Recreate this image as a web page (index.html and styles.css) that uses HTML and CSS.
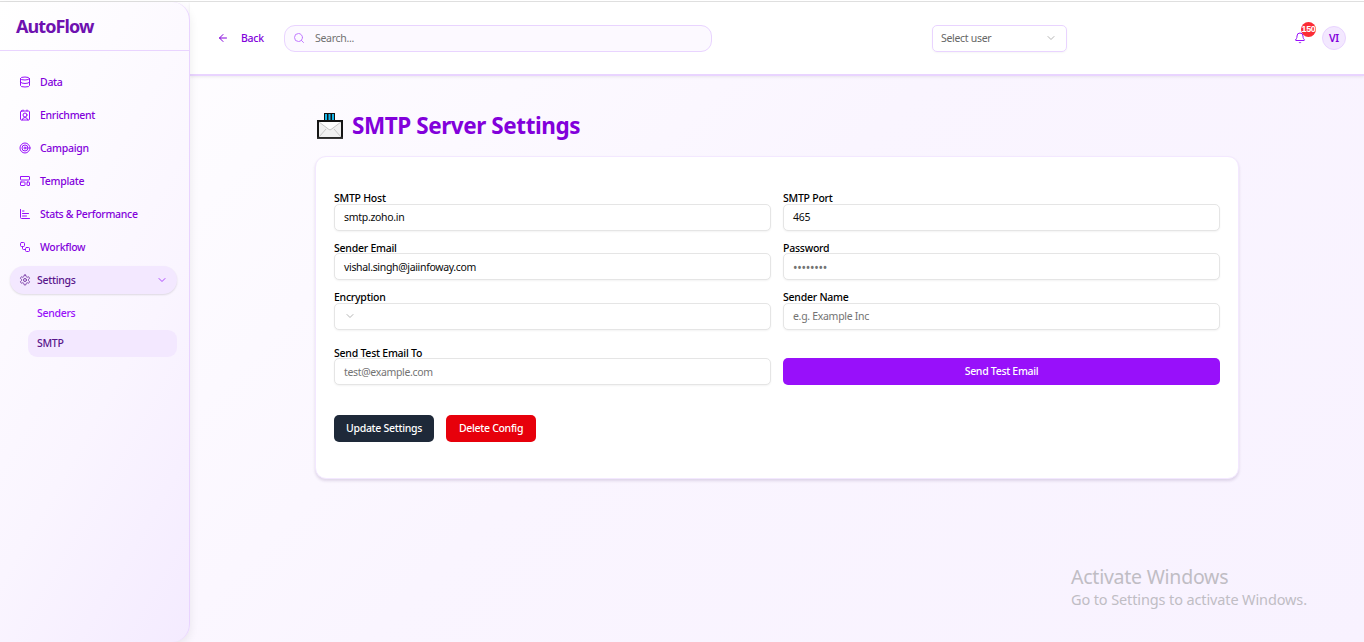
FILE: index.html
```html
<!DOCTYPE html>
<html lang="en">
<head>
<meta charset="utf-8">
<title>AutoFlow</title>
<link rel="stylesheet" href="styles.css">
</head>
<body>
<div class="app">
  <aside class="sidebar">
    <div class="brand"><span>AutoFlow</span></div>
    <nav class="nav">
      <a class="nav-item"><svg class="icon" viewBox="0 0 24 24"><ellipse cx="12" cy="5" rx="9" ry="3"/><path d="M3 5v14a9 3 0 0 0 18 0V5M3 12a9 3 0 0 0 18 0"/></svg><span>Data</span></a>
      <a class="nav-item"><svg class="icon" viewBox="0 0 24 24"><path d="M16 2v2M8 2v2M17.900 22a6 6 0 0 0-11.800 0"/><circle cx="12" cy="12" r="4"/><rect x="3" y="4" width="18" height="18" rx="2"/></svg><span>Enrichment</span></a>
      <a class="nav-item"><svg class="icon" viewBox="0 0 24 24"><circle cx="12" cy="12" r="10"/><circle cx="12" cy="12" r="6"/><circle cx="12" cy="12" r="2"/></svg><span>Campaign</span></a>
      <a class="nav-item"><svg class="icon" viewBox="0 0 24 24"><rect x="3" y="3" width="18" height="7" rx="1"/><rect x="3" y="14" width="9" height="7" rx="1"/><rect x="16" y="14" width="5" height="7" rx="1"/></svg><span>Template</span></a>
      <a class="nav-item"><svg class="icon" viewBox="0 0 24 24"><path d="M3 3v16a2 2 0 0 0 2 2h16M7 16h8M7 11h12M7 6h3"/></svg><span>Stats &amp; Performance</span></a>
      <a class="nav-item"><svg class="icon" viewBox="0 0 24 24"><rect x="3" y="3" width="8" height="8" rx="2"/><path d="M7 11v4a2 2 0 0 0 2 2h4"/><rect x="13" y="13" width="8" height="8" rx="2"/></svg><span>Workflow</span></a>
      <a class="nav-item open"><svg class="icon" viewBox="0 0 24 24"><path d="M12.22 2h-.44a2 2 0 0 0-2 2v.18a2 2 0 0 1-1 1.73l-.43.25a2 2 0 0 1-2 0l-.15-.08a2 2 0 0 0-2.73.73l-.22.38a2 2 0 0 0 .73 2.73l.15.1a2 2 0 0 1 1 1.72v.51a2 2 0 0 1-1 1.74l-.15.09a2 2 0 0 0-.73 2.73l.22.38a2 2 0 0 0 2.73.73l.15-.08a2 2 0 0 1 2 0l.43.25a2 2 0 0 1 1 1.73V20a2 2 0 0 0 2 2h.44a2 2 0 0 0 2-2v-.18a2 2 0 0 1 1-1.73l.43-.25a2 2 0 0 1 2 0l.15.08a2 2 0 0 0 2.73-.73l.22-.39a2 2 0 0 0-.73-2.73l-.15-.08a2 2 0 0 1-1-1.74v-.5a2 2 0 0 1 1-1.74l.15-.09a2 2 0 0 0 .73-2.73l-.22-.38a2 2 0 0 0-2.73-.73l-.15.08a2 2 0 0 1-2 0l-.43-.25a2 2 0 0 1-1-1.73V4a2 2 0 0 0-2-2z"/><circle cx="12" cy="12" r="3"/></svg><span>Settings</span><svg class="icon chevron" viewBox="0 0 24 24"><path d="m6 9 6 6 6-6"/></svg></a>
      <div class="subnav">
        <a class="sub-item">Senders</a>
        <a class="sub-item active">SMTP</a>
      </div>
    </nav>
  </aside>
  <div class="content">
    <header class="topbar">
      <a class="back"><svg class="icon" viewBox="0 0 24 24"><path d="m12 19-7-7 7-7M19 12H5"/></svg><span>Back</span></a>
      <div class="search"><svg class="icon" viewBox="0 0 24 24"><circle cx="11" cy="11" r="8"/><path d="m21 21-4.3-4.3"/></svg><span>Search...</span></div>
      <div class="user-select"><span>Select user</span><svg class="icon" viewBox="0 0 24 24"><path d="m6 9 6 6 6-6"/></svg></div>
      <div class="account">
        <div class="bell"><svg class="icon" viewBox="0 0 24 24"><path d="M10.27 21a2 2 0 0 0 3.46 0M3.26 15.33A1 1 0 0 0 4 17h16a1 1 0 0 0 .74-1.67C19.41 13.96 18 12.5 18 8A6 6 0 0 0 6 8c0 4.5-1.41 5.96-2.74 7.33"/></svg><span class="badge">150</span></div>
        <div class="avatar">VI</div>
      </div>
    </header>
    <main class="main">
      <h1 class="title">
        <svg class="mail" viewBox="0 0 26 26"><rect x="7" y="0" width="11" height="10" fill="#111"/><path d="M9 1v7M12.500 1v7M16 1v7" stroke="#16b5e8" stroke-width="2"/><rect x="1" y="8" width="24" height="17" fill="#f1f1f1" stroke="#151515" stroke-width="2"/><path d="M2 9h22l-10 7.500q-1 .7-2 0z" fill="#fff"/><path d="m2 9 10 7.500q1 .7 2 0l10-7.500M2 24l7-8M24 24l-7-8" fill="none" stroke="#c7c7c7"/><path d="M0 25.200h26" stroke="#383838" stroke-width="1.600"/></svg>
        <span>SMTP Server Settings</span>
      </h1>
      <section class="card">
        <div class="grid">
          <div class="field"><label>SMTP Host</label><div class="input">smtp.zoho.in</div></div>
          <div class="field"><label>SMTP Port</label><div class="input">465</div></div>
          <div class="field"><label>Sender Email</label><div class="input low">vishal.singh@jaiinfoway.com</div></div>
          <div class="field"><label>Password</label><div class="input placeholder dots">••••••••</div></div>
          <div class="field"><label>Encryption</label><div class="input"><svg class="icon caret" viewBox="0 0 24 24"><path d="m6 9 6 6 6-6"/></svg></div></div>
          <div class="field"><label>Sender Name</label><div class="input placeholder">e.g. Example Inc</div></div>
        </div>
        <div class="grid test">
          <div class="field"><label>Send Test Email To</label><div class="input placeholder low">test@example.com</div></div>
          <button class="btn send">Send Test Email</button>
        </div>
        <div class="actions">
          <button class="btn update">Update Settings</button>
          <button class="btn delete">Delete Config</button>
        </div>
      </section>
    </main>
  </div>
  <div class="watermark"><div class="wm-title">Activate Windows</div><div class="wm-text">Go to Settings to activate Windows.</div></div>
</div>
</body>
</html>
```
FILE: styles.css
```css
*, *::before { box-sizing: border-box; }
body {
  margin: 0;
  font-family: "Noto Sans", "Open Sans", sans-serif;
  font-size: 10.5px;
  line-height: 15px;
  letter-spacing: -0.3px;
  color: #0a0a0a;
}
.app {
  position: relative;
  display: flex;
  width: 1364px;
  height: 642px;
  padding-top: 1px;
  overflow: hidden;
  background: linear-gradient(135deg, #ffffff, #faf5ff 50%, #f8f2ff);
}
.app::before {
  content: "";
  position: absolute;
  inset: 0 0 auto;
  height: 2px;
  background: #fff;
  border-bottom: 1px solid #dfdfdf;
}
.icon {
  width: 12px;
  height: 12px;
  flex: none;
  fill: none;
  stroke: currentColor;
  stroke-width: 2;
  stroke-linecap: round;
  stroke-linejoin: round;
}
.sidebar {
  position: relative;
  z-index: 2;
  width: 190px;
  margin-top: 1px;
  flex: none;
  border-right: 1px solid #e9d4ff;
  border-radius: 0 18px 18px 0;
  background: linear-gradient(120deg, #ffffff, #faf5ff 60%, #f4ebff);
  box-shadow: 0 4px 10px rgba(0, 0, 0, 0.08);
}
.brand {
  height: 49px;
  padding: 12px 16px 0;
  border-bottom: 1px solid #e9d4ff;
  font-size: 18px;
  line-height: 24px;
  font-weight: 700;
  letter-spacing: -0.9px;
  color: #6e11b0;
}
.nav {
  display: flex;
  flex-direction: column;
  gap: 5px;
  padding: 17px 12px 0 9.5px;
}
.nav-item {
  display: flex;
  align-items: center;
  height: 28px;
  padding: 0 9px 0 9.5px;
  gap: 9px;
  border-radius: 14px;
  font-weight: 500;
  color: #8200db;
}
.nav-item .icon { color: #9810fa; }
.nav-item.open {
  gap: 6px;
  background: #f3e8ff;
  color: #59168b;
  box-shadow: 0 1px 2px rgba(0, 0, 0, 0.12);
}
.nav-item.open .icon { color: #7c3fa8; }
.nav-item.open .chevron { margin-left: auto; color: #ad46ff; }
.subnav {
  display: flex;
  flex-direction: column;
  gap: 3px;
  padding: 1px 0 0 18.5px;
}
.sub-item {
  height: 27px;
  padding: 0 9px;
  border-radius: 9px;
  line-height: 26px;
  font-weight: 500;
  color: #9810fa;
}
.sub-item.active { background: #f3e8ff; color: #59168b; }
.content { flex: 1; min-width: 0; }
.topbar {
  display: flex;
  align-items: center;
  height: 74px;
  margin-top: 1px;
  padding: 0 18px 0 27px;
  background: #fff;
  border-bottom: 2px solid #e9d4ff;
  box-shadow: 0 1px 3px rgba(0, 0, 0, 0.08);
}
.back {
  display: flex;
  align-items: center;
  gap: 12px;
  width: 67px;
  font-weight: 500;
  color: #8200db;
}
.search {
  display: flex;
  align-items: center;
  gap: 10px;
  width: 428px;
  height: 27px;
  padding-left: 8px;
  border: 1px solid #e9d4ff;
  border-radius: 11px;
  background: #fcf9ff;
  color: #717171;
}
.search .icon { color: #c27aff; }
.user-select {
  display: flex;
  align-items: center;
  justify-content: space-between;
  width: 135px;
  height: 27px;
  margin-left: 220px;
  padding: 0 9px 0 8px;
  border: 1px solid #e9d4ff;
  border-radius: 5px;
  color: #666;
  box-shadow: 0 1px 2px rgba(0, 0, 0, 0.04);
}
.user-select .icon { color: #b5b5b5; }
.account {
  display: flex;
  align-items: center;
  gap: 16px;
  margin-left: auto;
}
.bell { position: relative; display: flex; color: #9810fa; }
.badge {
  position: absolute;
  left: 7px;
  top: -10px;
  display: flex;
  justify-content: center;
  width: 15px;
  height: 15px;
  border-radius: 50%;
  background: #fb2c36;
  color: #fff;
  font-family: "Liberation Sans", sans-serif;
  font-size: 9px;
  font-weight: 700;
  line-height: 15px;
  letter-spacing: -0.4px;
}
.avatar {
  width: 24px;
  height: 24px;
  border: 1px solid #e9d4ff;
  border-radius: 50%;
  background: #f3e8ff;
  color: #8200db;
  font-weight: 600;
  line-height: 22px;
  text-align: center;
}
.main { width: 924px; margin: 36px 0 0 125px; }
.title {
  display: flex;
  align-items: center;
  gap: 9px;
  height: 27px;
  margin: 0 0 17px 2px;
  color: #8200db;
  font-size: 22.5px;
  line-height: 29px;
  font-weight: 700;
  letter-spacing: -0.43px;
}
.mail { width: 26px; height: 26px; }
.card {
  height: 323px;
  padding: 33.4px 18px 0;
  border: 1px solid #f3e8ff;
  border-radius: 11px;
  background: #fff;
  box-shadow: 0 2px 3px rgba(60, 20, 90, 0.14);
}
.grid {
  display: grid;
  grid-template-columns: 1fr 1fr;
  gap: 9px 12px;
}
.grid.test { margin-top: 15.2px; align-items: end; }
.field label {
  display: block;
  height: 13.5px;
  line-height: 16.4px;
  font-weight: 500;
  letter-spacing: -0.24px;
  color: #000;
}
.test .field label { height: 13.3px; line-height: 16px; }
.input {
  display: flex;
  align-items: center;
  height: 27px;
  padding: 0 9px;
  border: 1px solid #e5e5e5;
  border-radius: 5px;
  background: #fff;
  box-shadow: 0 1px 2px rgba(0, 0, 0, 0.05);
}
.input.low { padding-top: 1.5px; letter-spacing: -0.33px; }
.placeholder { color: #737373; }
.dots { padding-top: 1.5px; font-size: 12px; letter-spacing: -0.25px; }
.caret { color: #b5b5b5; }
.btn {
  height: 27px;
  padding: 0;
  border: 0;
  border-radius: 5px;
  color: #fff;
  font: inherit;
  font-weight: 500;
  letter-spacing: inherit;
}
.send { background: #9810fa; }
.actions { display: flex; gap: 12px; margin-top: 29.6px; }
.update { width: 100px; background: #1e2939; }
.delete { width: 90px; background: #e7000b; }
.watermark {
  position: absolute;
  left: 1071px;
  top: 564px;
  color: #c0bdc4;
  font-weight: 400;
}
.wm-title { font-size: 19.5px; line-height: 26px; letter-spacing: -0.24px; }
.wm-text { font-size: 14.5px; line-height: 19px; letter-spacing: -0.12px; }
```
